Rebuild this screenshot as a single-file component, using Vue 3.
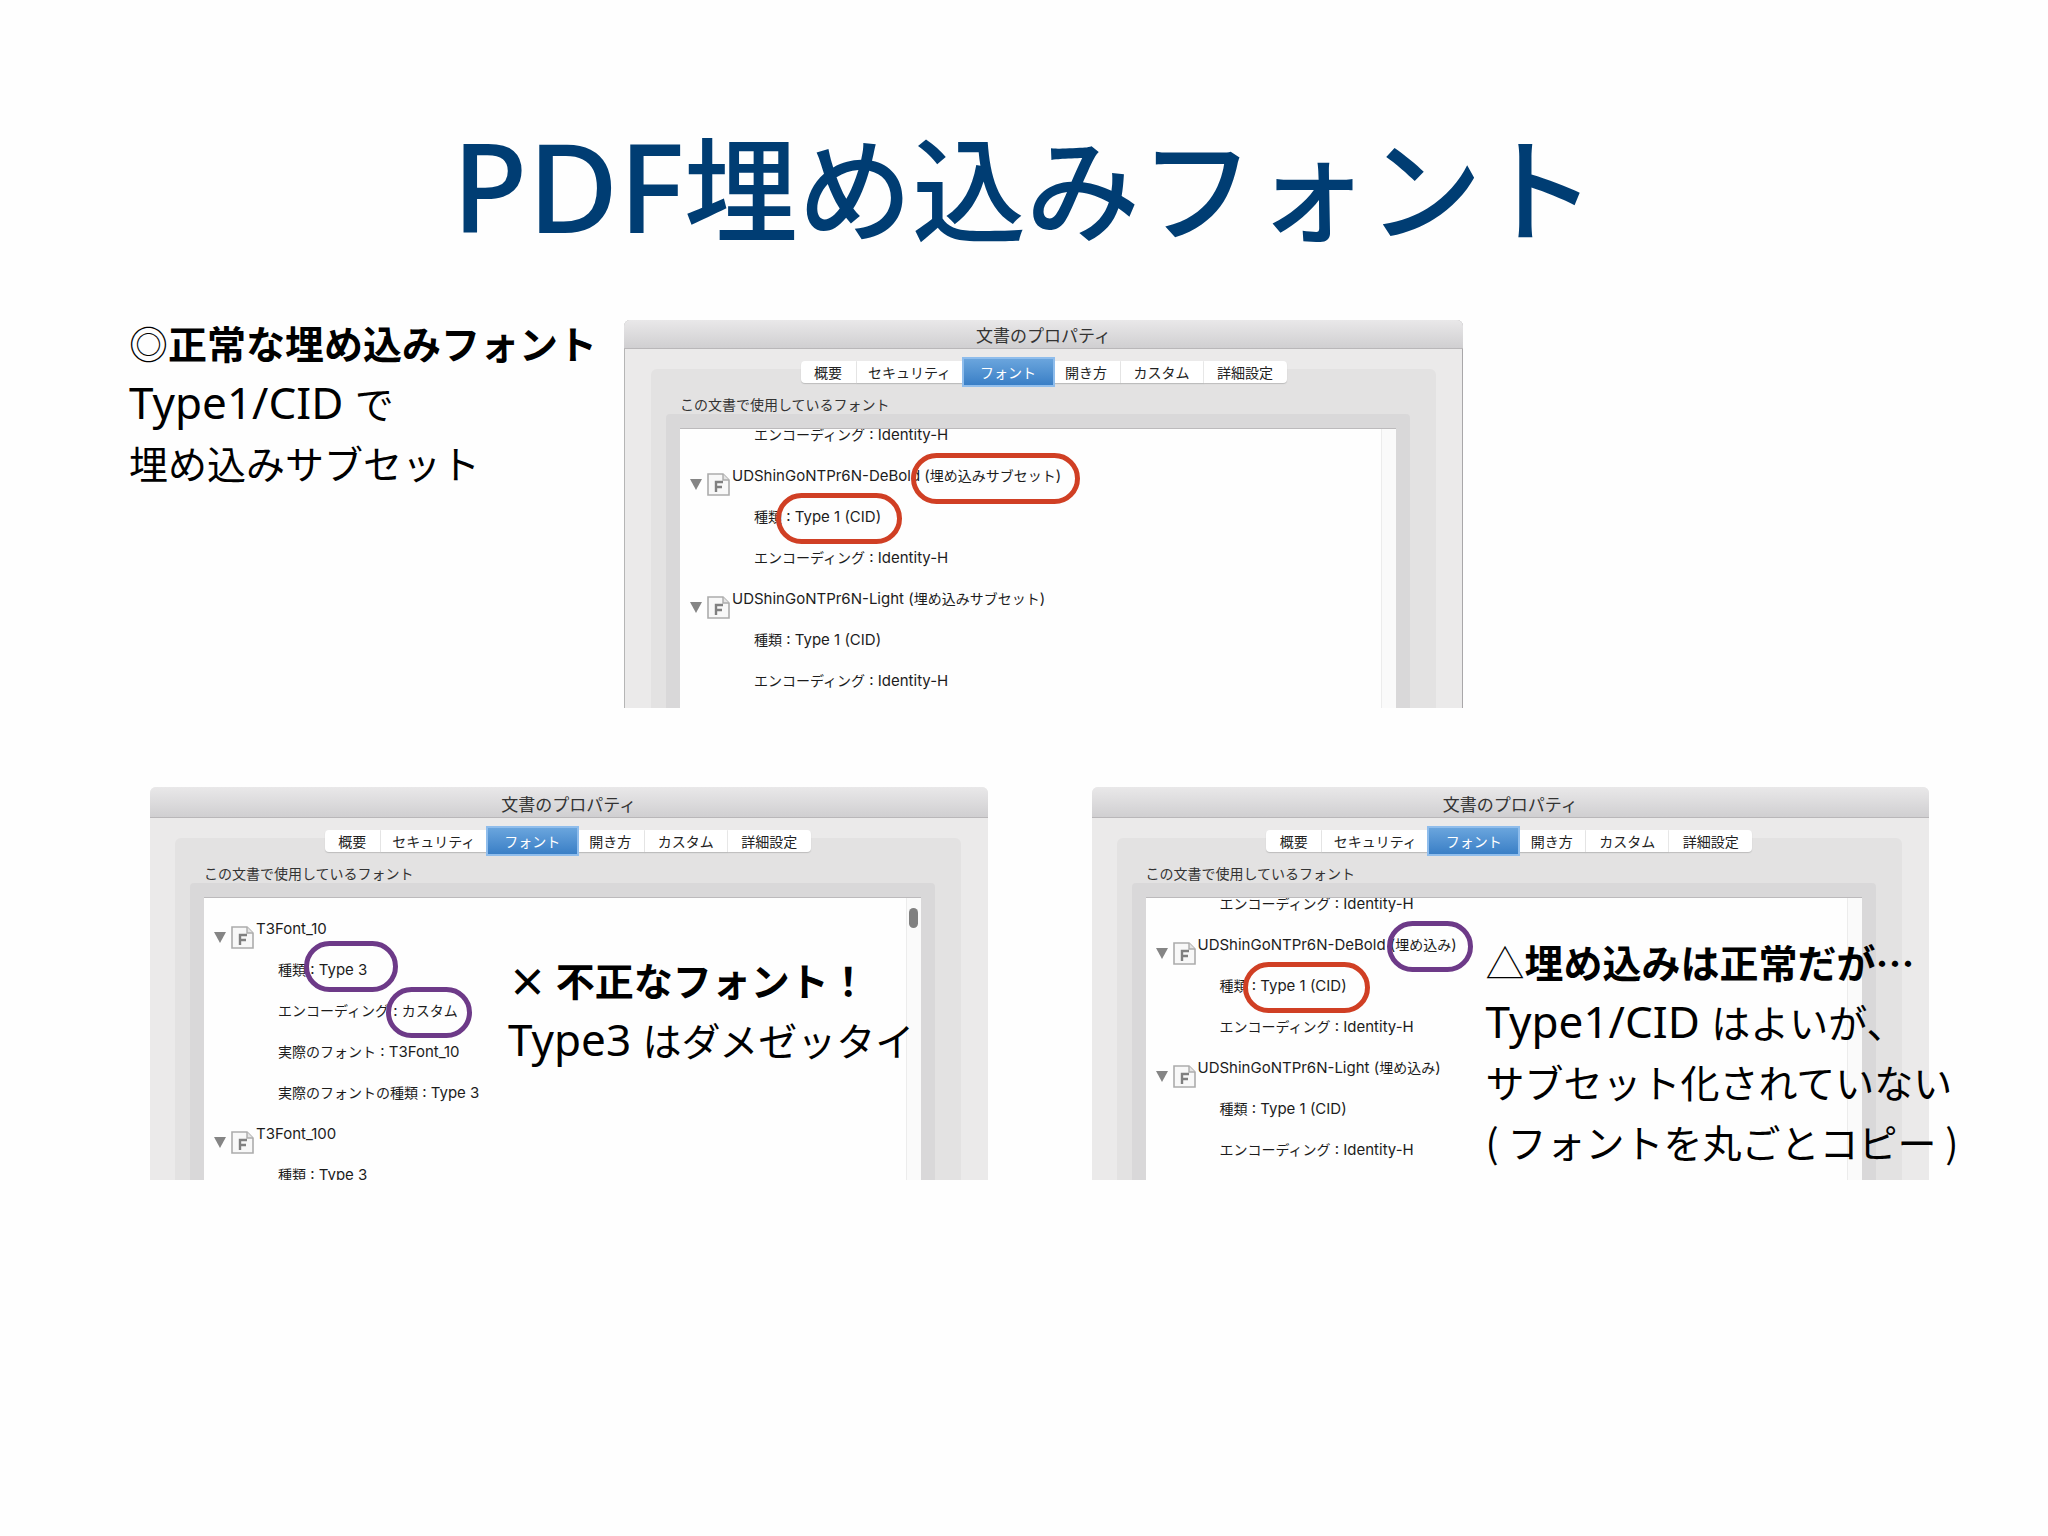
<template>
  <main class="slide" lang="ja">
    <h1 class="slide-title"><span class="latin">PDF</span>埋め込みフォント</h1>

    <section class="row row-top">
      <div class="note">
        <p class="lead"><span class="mark">◎</span>正常な埋め込みフォント</p>
        <p><span class="latin">Type1/CID </span>で</p>
        <p>埋め込みサブセット</p>
      </div>
    </section>

    <section v-for="(group, g) in groups" :key="g" class="row" :class="group.className">
      <article v-for="win in group.windows" :key="win.id" class="window" :class="win.id">
        <header class="titlebar">文書のプロパティ</header>
        <div class="window-body">
          <div class="tabs" role="tablist">
            <button
              v-for="tab in tabs"
              :key="tab.label"
              type="button"
              role="tab"
              class="tab"
              :class="[tab.size, { active: tab.active }]"
              :aria-selected="tab.active ? 'true' : 'false'"
            >
              {{ tab.label }}
            </button>
          </div>
          <div class="pane">
            <p class="pane-label">この文書で使用しているフォント</p>
            <div class="list-frame">
              <div class="list" :class="{ scrolled: win.scrolled }">
                <ul class="rows">
                  <li v-for="(item, i) in win.rows" :key="i" class="item" :class="{ leaf: !item.node }">
                    <template v-if="item.node">
                      <button type="button" class="toggle" aria-label="折りたたむ">
                        <svg viewBox="0 0 12 11" width="12" height="11">
                          <path d="M0 0h12L6 11z" fill="#858585" />
                        </svg>
                      </button>
                      <svg class="font-icon" viewBox="0 0 23 23" width="23" height="23">
                        <path d="M1 1h15l6 6v15H1z" fill="#f8f8f8" stroke="#acacac" stroke-width="1.6" />
                        <path d="M16 1v6h6" fill="#e4e4e4" stroke="#acacac" stroke-width="1.4" />
                        <path d="M9 19V9h7M9 14h6" fill="none" stroke="#808080" stroke-width="2.4" />
                      </svg>
                    </template>
                    <span class="item-text">
                      <span v-for="(run, r) in splitRuns(item.text)" :key="r" :class="{ latin: run.latin }">{{ run.text }}</span>
                    </span>
                  </li>
                </ul>
                <div class="track"><span v-if="win.thumb" class="thumb"></span></div>
                <span
                  v-for="(ring, k) in win.rings"
                  :key="k"
                  class="ring"
                  :class="ring.color"
                  :style="{ left: ring.x + 'px', top: ring.y + 'px', width: ring.w + 'px' }"
                ></span>
              </div>
            </div>
          </div>
        </div>

        <div v-if="win.id === 'type3'" class="note overlay">
          <p class="lead">× 不正なフォント！</p>
          <p><span class="latin">Type3 </span>はダメゼッタイ</p>
        </div>
        <div v-if="win.id === 'full'" class="note overlay">
          <p class="lead"><span class="mark">△</span>埋め込みは正常だが…</p>
          <p><span class="latin">Type1/CID </span>はよいが、</p>
          <p>サブセット化されていない</p>
          <p>( フォントを丸ごとコピー )</p>
        </div>
      </article>
    </section>
  </main>
</template>

<script setup>
const tabs = [
  { label: "概要", size: "w-56" },
  { label: "セキュリティ", size: "w-107" },
  { label: "フォント", size: "w-89", active: true },
  { label: "開き方", size: "w-68" },
  { label: "カスタム", size: "w-83" },
  { label: "詳細設定", size: "w-83" }
];

const type1 = "種類 : Type 1 (CID)";
const identity = "エンコーディング : Identity-H";

function embeddedRows(state) {
  return [
    { text: identity },
    { node: true, text: `UDShinGoNTPr6N-DeBold (${state})` },
    { text: type1 },
    { text: identity },
    { node: true, text: `UDShinGoNTPr6N-Light (${state})` },
    { text: type1 },
    { text: identity }
  ];
}

const groups = [
  {
    className: "row-subset",
    windows: [
      {
        id: "subset",
        scrolled: true,
        rows: embeddedRows("埋め込みサブセット"),
        rings: [
          { color: "red", x: 231, y: 24, w: 169 },
          { color: "red", x: 96, y: 64, w: 126 }
        ]
      }
    ]
  },
  {
    className: "row-bottom",
    windows: [
      {
        id: "type3",
        thumb: true,
        rows: [
          { node: true, text: "T3Font_10" },
          { text: "種類 : Type 3" },
          { text: "エンコーディング : カスタム" },
          { text: "実際のフォント : T3Font_10" },
          { text: "実際のフォントの種類 : Type 3" },
          { node: true, text: "T3Font_100" },
          { text: "種類 : Type 3" }
        ],
        rings: [
          { color: "purple", x: 100, y: 43, w: 94 },
          { color: "purple", x: 182, y: 89, w: 86 }
        ]
      },
      {
        id: "full",
        scrolled: true,
        rows: embeddedRows("埋め込み"),
        rings: [
          { color: "purple", x: 241, y: 23, w: 86 },
          { color: "red", x: 97, y: 64, w: 127 }
        ]
      }
    ]
  }
];

// Latin runs are set in a slightly larger face than the Japanese text
function splitRuns(text) {
  return text.match(/[\x20-\x7e]+|[^\x20-\x7e]+/g).map((part) => ({
    text: part,
    latin: /[\x20-\x7e]/.test(part)
  }));
}
</script>

<style>
body {
  margin: 0;
  background: #fefefe;
}
</style>

<style scoped>
.slide {
  padding: 104px 0;
  font-family: "Noto Sans CJK JP", sans-serif;
  color: #000;
}

p,
ul,
h1 {
  margin: 0;
  padding: 0;
}

.slide-title {
  color: #003d73;
  font-size: 114px;
  font-weight: 500;
  line-height: 160px;
  text-align: center;
  white-space: nowrap;
}

.slide-title .latin {
  font-family: "Noto Sans", sans-serif;
  font-size: 124px;
  line-height: 1;
}

.row {
  display: grid;
}

.row-top {
  grid-template-columns: minmax(0, 1fr);
  height: 0;
  margin-top: 48px;
  padding-left: 129px;
}

.row-subset {
  grid-template-columns: minmax(0, 1fr);
  margin-top: 8px;
  padding: 0 585px 0 624px;
}

.row-bottom {
  grid-template-columns: minmax(0, 1fr) minmax(0, 1fr);
  column-gap: 104px;
  margin-top: 79px;
  padding: 0 119px 0 150px;
}

.note {
  font-size: 39px;
  line-height: 60px;
  white-space: nowrap;
}

.note .latin {
  font-family: "Noto Sans", sans-serif;
  font-size: 44px;
  font-weight: 400;
  line-height: 1;
}

.note .lead {
  font-weight: 700;
}

.note .mark {
  font-weight: 300;
}

.overlay {
  position: absolute;
}

.type3 .overlay {
  left: 358px;
  top: 162px;
}

.full .overlay {
  left: 394px;
  top: 144px;
}

.window {
  position: relative;
  background: #ebeaea;
  border-radius: 6px 6px 0 0;
}

.subset {
  box-shadow: inset 1px 0 #b5b5b5, inset -1px 0 #a9a7a9;
}

.titlebar {
  height: 31px;
  box-sizing: border-box;
  border-bottom: 1px solid #b9b7b9;
  border-radius: 6px 6px 0 0;
  background: linear-gradient(#e9e8e9, #d0cfd1);
  color: #333;
  font-size: 17px;
  line-height: 33px;
  text-align: center;
}

.subset .titlebar {
  height: 29px;
  line-height: 29px;
}

.window-body {
  padding: 8px 27px 0;
}

.row-bottom .window-body {
  padding-left: 25px;
}

.tabs {
  position: relative;
  display: flex;
  justify-content: center;
  align-items: center;
  height: 30px;
}

.tab {
  height: 22px;
  padding: 0;
  border: 0;
  border-right: 1px solid #ececec;
  background: #fff;
  box-shadow: 0 1px 1px #bdbdbd;
  color: #222;
  font-family: inherit;
  font-size: 14px;
  line-height: 22px;
  white-space: nowrap;
}

.tab:first-child {
  border-radius: 4px 0 0 4px;
}

.tab:last-child {
  border-right: 0;
  border-radius: 0 4px 4px 0;
}

.tab.active {
  z-index: 1;
  height: 26px;
  border: 0;
  background: linear-gradient(#6aa5dd, #3a7fc6);
  box-shadow: 0 0 0 2px #8fbdec;
  color: #fff;
}

.w-56 {
  width: 56px;
}

.w-68 {
  width: 68px;
}

.w-83 {
  width: 83px;
}

.w-89 {
  width: 89px;
}

.w-107 {
  width: 107px;
}

.pane {
  margin-top: -18px;
  padding: 18px 26px 0 15px;
  border-radius: 6px 6px 0 0;
  background: #e3e2e2;
}

.pane-label {
  padding: 10px 0 3px 14px;
  color: #333;
  font-size: 14px;
  line-height: 14px;
}

.list-frame {
  padding: 14px 14px 0;
  border-radius: 4px 4px 0 0;
  background: #d9d8d9;
}

.list {
  position: relative;
  display: flex;
  height: 283px;
  box-sizing: border-box;
  overflow: hidden;
  border-top: 1px solid #bcbabc;
  background: #fefefe;
}

.subset .list {
  height: 280px;
}

.rows {
  flex: 1;
  padding-top: 10px;
  list-style: none;
}

.scrolled .rows {
  margin-top: -15px;
  padding-top: 0;
}

.item {
  display: flex;
  height: 41px;
  padding-left: 10px;
  color: #1c1c1c;
  font-size: 14px;
  line-height: 41px;
  white-space: pre;
}

.leaf {
  padding-left: 74px;
}

.item-text {
  display: flex;
}

.item .latin {
  font-family: Inter, sans-serif;
  font-size: 15px;
}

.toggle {
  display: flex;
  align-self: flex-end;
  margin: 0 5px 6px 0;
  padding: 0;
  border: 0;
  background: none;
}

.font-icon {
  align-self: flex-end;
  margin-right: 2px;
}

.track {
  width: 14px;
  padding-top: 10px;
  border-left: 1px solid #ececec;
  background: #fafafa;
}

.thumb {
  display: block;
  width: 9px;
  height: 20px;
  margin: 0 auto;
  border-radius: 5px;
  background: #808080;
}

.ring {
  position: absolute;
  height: 51px;
  box-sizing: border-box;
  border: 5px solid;
  border-radius: 26px;
}

.ring.red {
  border-color: #d03f24;
}

.ring.purple {
  border-color: #6d3a88;
}
</style>
